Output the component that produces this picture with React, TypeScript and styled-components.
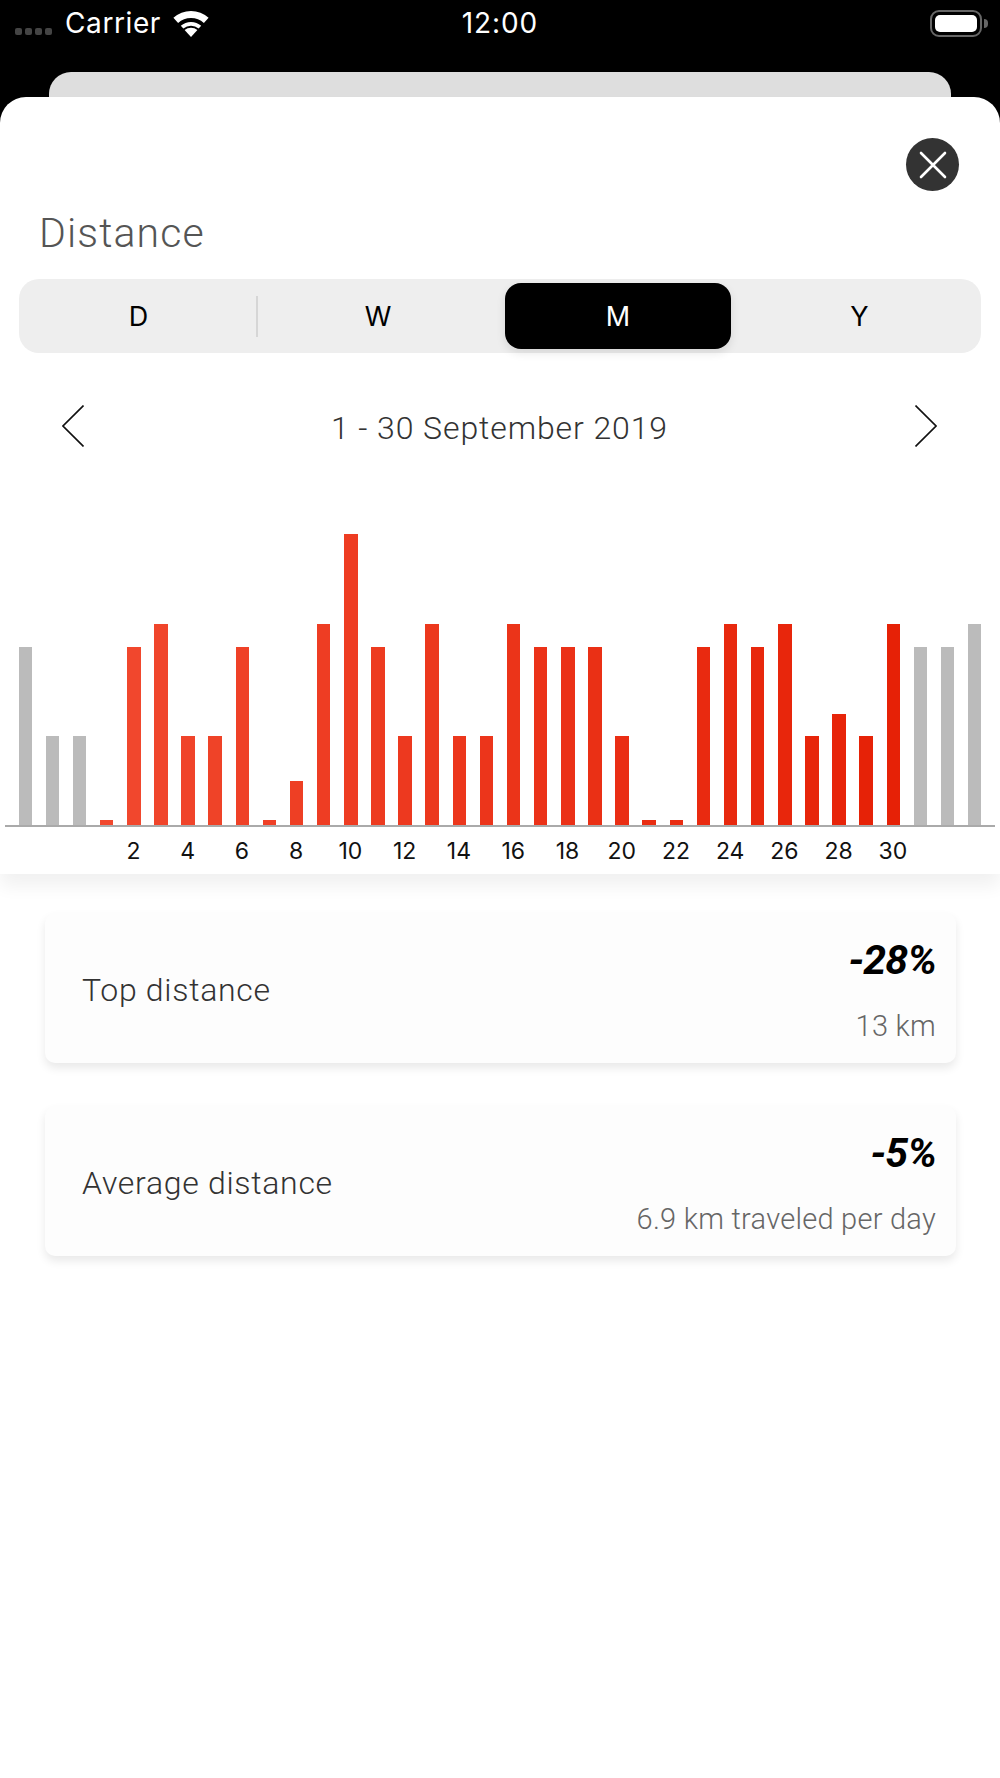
import React from 'react';
import styled, { createGlobalStyle } from 'styled-components';

const GlobalStyle = createGlobalStyle`
	html, body {
		margin: 0;
		padding: 0;
		background: #fff;
	}
	* {
		box-sizing: border-box;
	}
`;

const din = `Roboto, "Liberation Sans", sans-serif`;
const sf = `Inter, "Liberation Sans", sans-serif`;

const Page = styled.div`
	width: 1000px;
	height: 1778px;
	background: #fff;
	overflow: hidden;
`;

const Top = styled.div`
	background: #000;
	height: 97px;
	display: flex;
	flex-direction: column;
`;

const StatusBar = styled.div`
	height: 72px;
	padding: 10px 12px 0 15px;
	display: grid;
	grid-template-columns: 1fr auto 1fr;
	align-items: flex-start;
	color: #fff;
	font-family: ${sf};
	font-size: 28px;
	line-height: 27px;
`;

const StatusLeft = styled.div`
	display: flex;
	align-items: flex-start;
`;

const Signal = styled.div`
	display: flex;
	gap: 3px;
	margin-top: 18px;
	margin-right: 13px;
`;

const SignalDot = styled.span`
	width: 7px;
	height: 7px;
	border-radius: 2px;
	background: #444;
`;

const Carrier = styled.span`
	margin-right: 12px;
	letter-spacing: 0.6px;
`;

const Clock = styled.span`
	letter-spacing: 0.9px;
	margin-left: -3px;
`;

const StatusRight = styled.div`
	display: flex;
	justify-content: flex-end;
	align-items: center;
	gap: 2px;
`;

const Battery = styled.div`
	width: 52px;
	height: 27px;
	border: 2px solid #666;
	border-radius: 9px;
	padding: 3px;
`;

const BatteryFill = styled.div`
	width: 100%;
	height: 100%;
	background: #fff;
	border-radius: 5px;
`;

const BatteryNub = styled.div`
	width: 4px;
	height: 9px;
	background: #666;
	border-radius: 0 4px 4px 0;
`;

const BehindCard = styled.div`
	height: 25px;
	margin: 0 49px;
	background: #dedede;
	border-radius: 22px 22px 0 0;
`;

const Backdrop = styled.div`
	background: #000;
	position: relative;
`;

const Sheet = styled.div`
	height: 777px;
	background: #fff;
	border-radius: 26px 26px 0 0;
	box-shadow: 0 12px 18px rgba(0, 0, 0, 0.06);
	display: flex;
	flex-direction: column;
	padding-top: 41px;
`;

const CloseRow = styled.div`
	display: flex;
	justify-content: flex-end;
	padding-right: 41px;
`;

const CloseButton = styled.button`
	width: 53px;
	height: 53px;
	padding: 0;
	border: 0;
	border-radius: 50%;
	background: #333;
	display: flex;
	align-items: center;
	justify-content: center;
`;

const Title = styled.h1`
	margin: 19px 0 0 39px;
	height: 47px;
	font-family: ${din};
	font-weight: 300;
	font-size: 41px;
	line-height: 47px;
	letter-spacing: 1.1px;
	color: #555;
`;

const Segmented = styled.div`
	margin: 22px 19px 0 19px;
	height: 74px;
	background: #eee;
	border-radius: 20px;
	display: grid;
	grid-template-columns: 239px 240px 240px 1fr;
	align-items: center;
	font-family: ${sf};
	font-size: 27px;
`;

const Segment = styled.div<{ $active?: boolean; $divider?: boolean }>`
	height: 66px;
	display: flex;
	align-items: center;
	justify-content: center;
	color: ${(p) => (p.$active ? '#fff' : '#000')};
	background: ${(p) => (p.$active ? '#000' : 'transparent')};
	border-radius: 16px;
	margin: ${(p) => (p.$active ? '0 7px' : '0')};
	box-shadow: ${(p) => (p.$active ? '0 4px 10px rgba(0, 0, 0, 0.1)' : 'none')};
	position: relative;

	&::after {
		content: '';
		display: ${(p) => (p.$divider ? 'block' : 'none')};
		position: absolute;
		right: 0;
		top: 13px;
		width: 2px;
		height: 41px;
		background: #d6d6d6;
	}
`;

const DateRow = styled.div`
	margin-top: 51px;
	padding: 0 63px 0 62px;
	height: 44px;
	display: flex;
	align-items: center;
	justify-content: space-between;
`;

const DateText = styled.span`
	font-family: ${din};
	font-weight: 300;
	font-size: 32px;
	letter-spacing: 0.9px;
	color: #333;
	margin-top: 3px;
`;

const Chart = styled.div`
	margin: 85px 5px 0;
`;

const Plot = styled.div`
	height: 294px;
	padding-left: 13.5px;
	border-bottom: 2px solid #aaa;
	display: flex;
	align-items: flex-end;
	gap: 13.63px;
`;

const Bar = styled.div<{ $height: number; $color: string }>`
	flex: 0 0 13.5px;
	height: ${(p) => p.$height}px;
	background: ${(p) => p.$color};
`;

const Ticks = styled.div`
	padding-left: 6.4px;
	margin-top: 11px;
	display: flex;
	font-family: ${sf};
	font-size: 23px;
	line-height: 26px;
	color: #111;
`;

const Tick = styled.span`
	flex: 0 0 27.13px;
	min-width: 0;
	display: flex;
	justify-content: center;
	white-space: nowrap;
`;

const Cards = styled.div`
	margin: 39px 44px 0 45px;
	display: flex;
	flex-direction: column;
	gap: 43px;
`;

const Card = styled.div`
	height: 150px;
	padding: 24px 20px 0 37px;
	background: #fdfdfd;
	border-radius: 10px;
	box-shadow: 0 5px 10px rgba(0, 0, 0, 0.09);
	display: flex;
	justify-content: space-between;
`;

const CardLabel = styled.span`
	margin-top: 33px;
	font-family: ${din};
	font-weight: 300;
	font-size: 32px;
	line-height: 40px;
	letter-spacing: 0.7px;
	color: #333;
`;

const CardValues = styled.div`
	display: flex;
	flex-direction: column;
	align-items: flex-end;
`;

const Change = styled.span`
	font-family: ${din};
	font-weight: 700;
	font-style: italic;
	font-size: 41px;
	line-height: 46px;
	letter-spacing: -0.8px;
	color: #000;
`;

const Detail = styled.span`
	margin-top: 26px;
	font-family: ${din};
	font-weight: 300;
	font-size: 29px;
	line-height: 34px;
	letter-spacing: 0.25px;
	color: #666;
`;

const days = [5, 178, 201, 89, 89, 178, 5, 44, 201, 291, 178, 89, 201, 89, 89, 201, 178, 178, 178, 89, 5, 5, 178, 201, 178, 201, 89, 111, 89, 201];
const before = [178, 89, 89];
const after = [178, 178, 201];

// red runs slightly deeper from the first day of the month to the last
const tone = (i: number): string => {
	const t = i / (days.length - 1);
	const mix = (a: number, b: number) => Math.round(a + (b - a) * t);
	return `rgb(${mix(241, 230)}, ${mix(72, 33)}, ${mix(46, 6)})`;
};

const stats = [
	{ label: 'Top distance', change: '-28%', detail: '13 km' },
	{ label: 'Average distance', change: '-5%', detail: '6.9 km traveled per day' }
];

const WifiIcon = () => (
	<svg width="36" height="27" viewBox="0 0 36 27">
		<path d="M18 27 L11.6 20 A10 10 0 0 1 24.4 20 Z" fill="#fff" />
		<path d="M7.8 15.8 A15.5 15.5 0 0 1 28.2 15.8 L25.6 18.6 A11.6 11.6 0 0 0 10.4 18.6 Z" fill="#fff" />
		<path d="M0.4 7.8 A26 26 0 0 1 35.6 7.8 L30.9 13 A19 19 0 0 0 5.1 13 Z" fill="#fff" />
	</svg>
);

const Chevron: React.FC<{ flip?: boolean }> = ({ flip }) => (
	<svg width="22" height="42" viewBox="0 0 22 42" fill="none" stroke="#111" strokeWidth="1.6">
		<path d={flip ? 'M0.5 0.5 L21 21 L0.5 41.5' : 'M21.5 0.5 L1 21 L21.5 41.5'} />
	</svg>
);

const App: React.FC = () => {
	return (
		<Page>
			<GlobalStyle />
			<Top>
				<StatusBar>
					<StatusLeft>
						<Signal>
							<SignalDot />
							<SignalDot />
							<SignalDot />
							<SignalDot />
						</Signal>
						<Carrier>Carrier</Carrier>
						<WifiIcon />
					</StatusLeft>
					<Clock>12:00</Clock>
					<StatusRight>
						<Battery>
							<BatteryFill />
						</Battery>
						<BatteryNub />
					</StatusRight>
				</StatusBar>
				<BehindCard />
			</Top>
			<Backdrop>
				<Sheet>
					<CloseRow>
						<CloseButton aria-label="Close">
							<svg width="28" height="28" viewBox="0 0 28 28" stroke="#fff" strokeWidth="2.6" strokeLinecap="round">
								<path d="M2 2 L26 26 M26 2 L2 26" />
							</svg>
						</CloseButton>
					</CloseRow>
					<Title>Distance</Title>
					<Segmented>
						<Segment $divider>D</Segment>
						<Segment>W</Segment>
						<Segment $active>M</Segment>
						<Segment>Y</Segment>
					</Segmented>
					<DateRow>
						<Chevron />
						<DateText>1 - 30 September 2019</DateText>
						<Chevron flip />
					</DateRow>
					<Chart>
						<Plot>
							{before.map((h, i) => (
								<Bar key={`b${i}`} $height={h} $color="#bbb" />
							))}
							{days.map((h, i) => (
								<Bar key={i} $height={h} $color={tone(i)} />
							))}
							{after.map((h, i) => (
								<Bar key={`a${i}`} $height={h} $color="#bbb" />
							))}
						</Plot>
						<Ticks>
							{before.map((_, i) => (
								<Tick key={`b${i}`} />
							))}
							{days.map((_, i) => (
								<Tick key={i}>{(i + 1) % 2 === 0 ? i + 1 : ''}</Tick>
							))}
						</Ticks>
					</Chart>
				</Sheet>
			</Backdrop>
			<Cards>
				{stats.map((s) => (
					<Card key={s.label}>
						<CardLabel>{s.label}</CardLabel>
						<CardValues>
							<Change>{s.change}</Change>
							<Detail>{s.detail}</Detail>
						</CardValues>
					</Card>
				))}
			</Cards>
		</Page>
	);
};

export default App;
